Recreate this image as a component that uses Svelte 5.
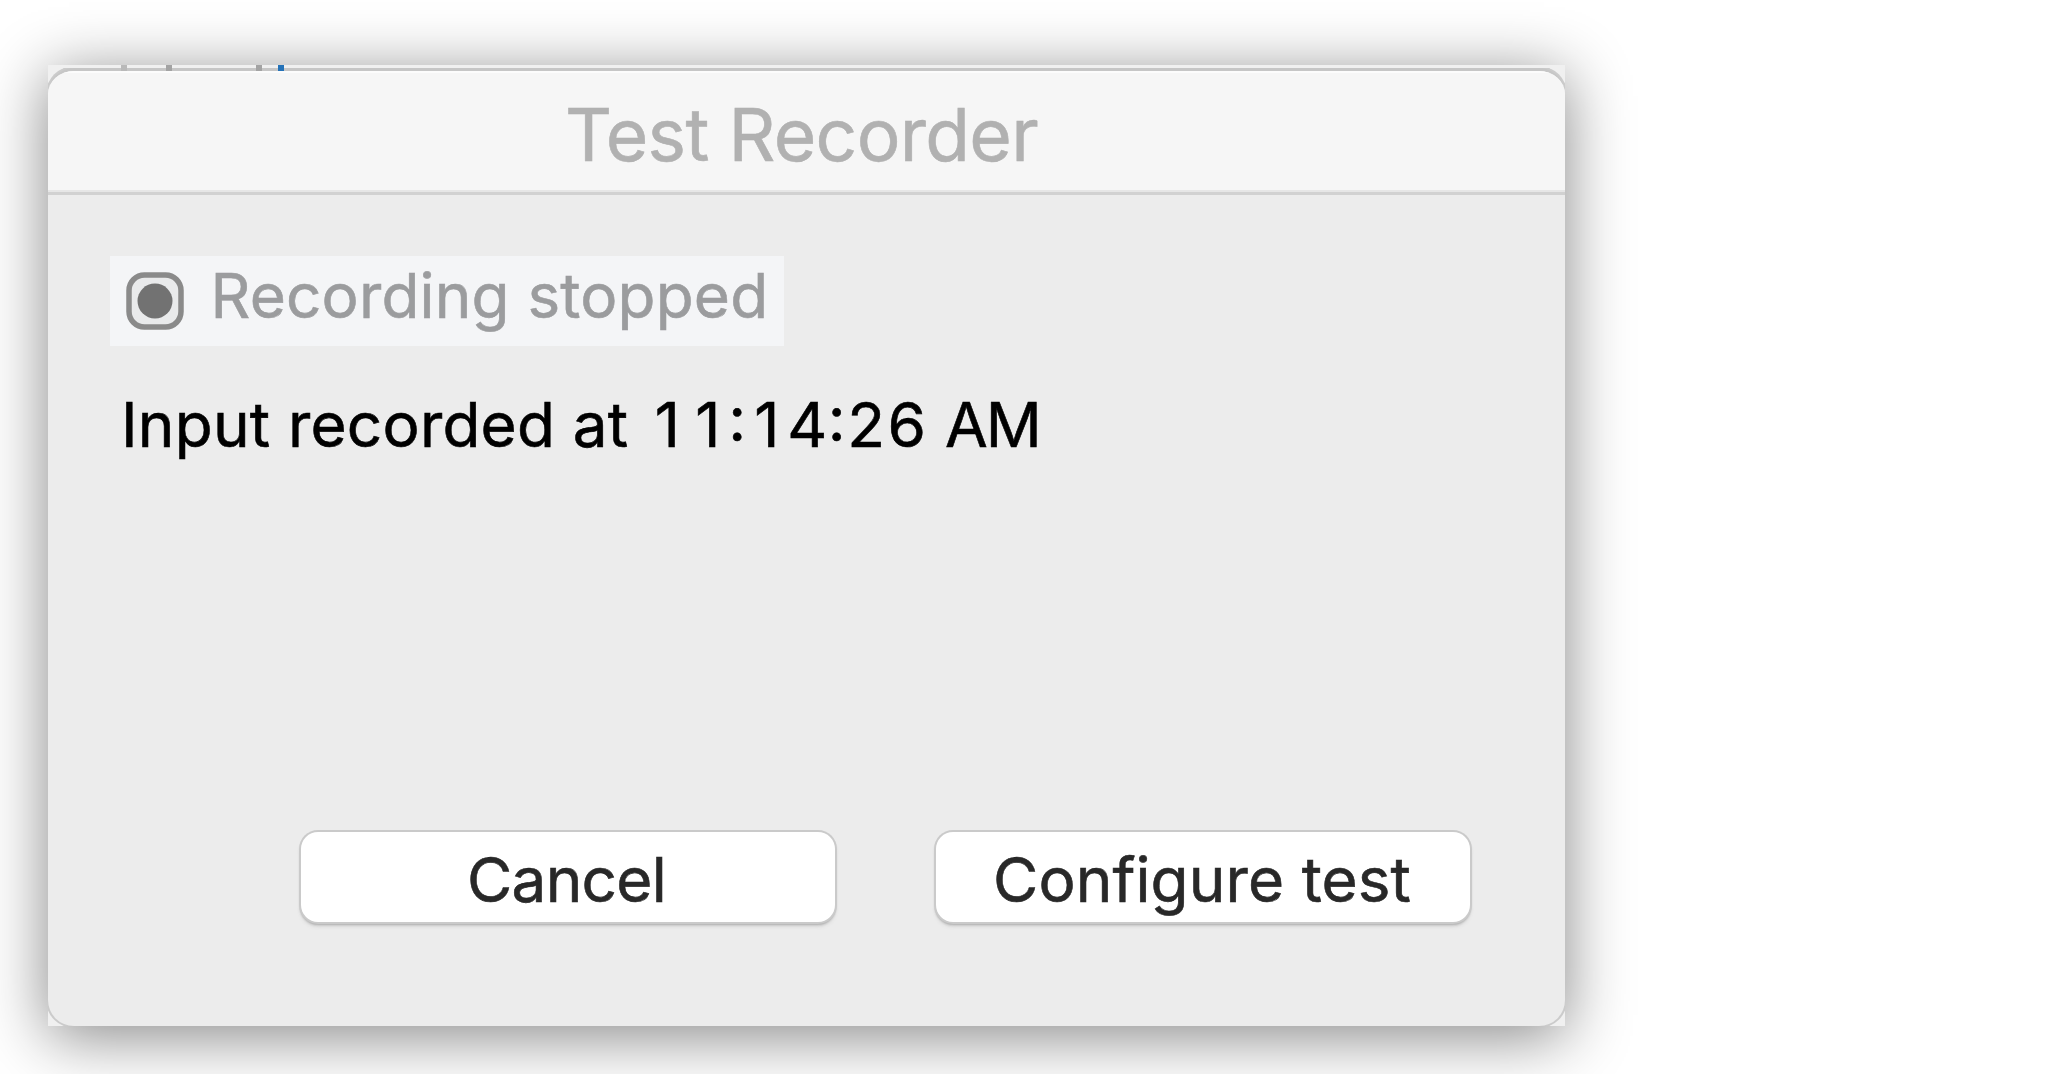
<script>
  const title = 'Test Recorder';
  const status = 'Recording stopped';
  const time = '11:14:26';
</script>

<main class="stage">
  <section class="frame">
    <div class="behind">
      <i class="tick t1"></i>
      <i class="tick t2"></i>
      <i class="tick t3"></i>
      <i class="tick t4"></i>
    </div>
    <div class="window">
      <header class="titlebar"><h1>{title}</h1></header>
      <div class="body">
        <div class="status">
          <svg class="record" viewBox="0 0 58 58" aria-hidden="true">
            <rect x="3" y="3" width="52" height="52" rx="15.5" fill="#e9eaeb" stroke="#8a8a8a" stroke-width="5.5" />
            <circle cx="29" cy="29" r="17.5" fill="#727272" />
          </svg>
          <span>{status}</span>
        </div>
        <p class="message">
          <span class="words">Input recorded at</span>
          <span class="time">{#each time.split('') as ch}<span class:colon={ch === ':'}>{ch}</span>{/each}</span>
          <span class="meridiem">AM</span>
        </p>
        <footer class="actions">
          <button class="cancel">Cancel</button>
          <button class="configure">Configure test</button>
        </footer>
      </div>
    </div>
  </section>
</main>

<style>
  :global(body) {
    background: #fff;
    overflow: hidden;
  }
  .stage {
    box-sizing: border-box;
    height: 1074px;
    padding: 65px 0 0 48px;
    overflow: hidden;
    font-family: Inter, 'Liberation Sans', sans-serif;
    font-weight: 400;
    -webkit-text-stroke: 0.6px currentColor;
  }
  .frame {
    position: relative;
    display: flex;
    flex-direction: column;
    width: 1517px;
    height: 961px;
    background: #f0f0f0;
    box-shadow: 0 10px 60px rgba(0, 0, 0, 0.48);
  }
  .behind {
    position: absolute;
    inset: 0 0 auto;
    height: 6px;
    z-index: 1;
  }
  .tick {
    position: absolute;
    top: 0;
    width: 6px;
    height: 6px;
    background: #a3a3a3;
  }
  .t1 { left: 73px; background: #b9b9b9; }
  .t2 { left: 118px; }
  .t3 { left: 208px; }
  .t4 { left: 230px; background: #2472b8; }
  .window {
    flex: 1;
    display: flex;
    flex-direction: column;
    box-sizing: border-box;
    margin-top: 3px;
    border-top: 3px solid #c6c6c6;
    border-radius: 26px;
    background: #ececec;
    overflow: hidden;
    box-shadow: 0 0 0 2px #cbcbcb;
    clip-path: inset(0);
  }
  .titlebar {
    box-sizing: border-box;
    height: 124px;
    padding-bottom: 5px;
    display: flex;
    align-items: center;
    justify-content: center;
    background: #f6f6f6;
    border-bottom: 3px solid #d1d1d1;
    box-shadow: inset 0 2px #fcfcfc, inset 0 -2px #e6e6e6;
  }
  h1 {
    margin: 0 0 0 -10px;
    padding-top: 11px;
    font-size: 73px;
    line-height: 88px;
    font-weight: inherit;
    letter-spacing: -0.68px;
    color: #b1b1b1;
  }
  .body {
    flex: 1;
    display: flex;
    flex-direction: column;
    align-items: flex-start;
    padding: 61px 95px 0 62px;
  }
  .status {
    box-sizing: border-box;
    display: flex;
    align-items: center;
    width: 674px;
    height: 90px;
    padding-left: 16px;
    gap: 26.5px;
    background: #f4f5f7;
    color: #9b9c9e;
    font-size: 62px;
    line-height: 76px;
    letter-spacing: 0.18px;
    white-space: nowrap;
  }
  .status span {
    margin-top: -10px;
  }
  .record {
    width: 58px;
    height: 58px;
    flex: none;
  }
  .message {
    display: flex;
    margin: 41px 0 0 11px;
    font-size: 62px;
    line-height: 76px;
    color: #000;
    white-space: nowrap;
  }
  .words {
    width: 526px;
    letter-spacing: 0.22px;
  }
  .time {
    display: flex;
    width: 298px;
  }
  .time span {
    width: 40.5px;
    text-align: center;
  }
  .time .colon {
    width: 18.5px;
    display: flex;
    justify-content: center;
    margin-top: -6px;
  }
  .meridiem { letter-spacing: -2px; }
  .actions {
    display: flex;
    align-self: flex-end;
    gap: 101px;
    margin-top: 369px;
  }
  button {
    width: 534px;
    height: 90px;
    padding: 6px 0 0;
    border: 0;
    border-radius: 17px;
    background: #fff;
    box-shadow: 0 0 0 2px #cacaca, 0 2px 2px 1px #b2b2b2, 0 4px 4px 0 #cfcfcf;
    font: inherit;
    -webkit-text-stroke: inherit;
    font-size: 62px;
    line-height: 76px;
    color: #282828;
    white-space: nowrap;
  }
  .cancel { padding-right: 3px; letter-spacing: -0.7px; }
  .configure { padding-right: 2px; letter-spacing: 0.1px; }
</style>
